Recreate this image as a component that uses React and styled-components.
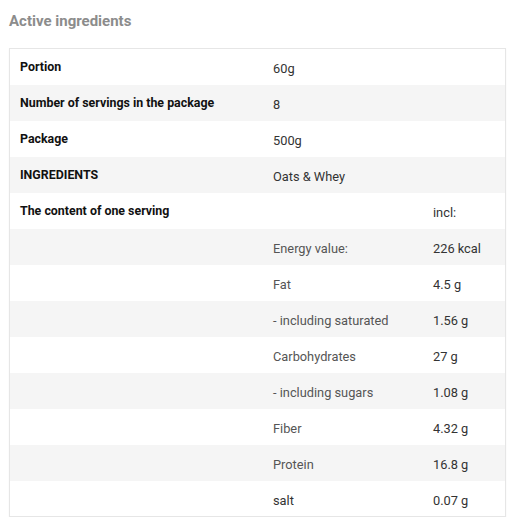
import React from "react";
import styled, { createGlobalStyle } from "styled-components";

const Global = createGlobalStyle`
  body {
    margin: 0;
    background: #fff;
    font-family: Roboto, "Liberation Sans", sans-serif;
  }
`;

const Wrapper = styled.div`
  padding: 11px 7px 0 9px;
`;

const Title = styled.h3`
  margin: 0 0 17px;
  font-size: 15px;
  line-height: 20px;
  font-weight: 700;
  color: #8c8c8c;
`;

const Table = styled.table`
  width: 497px;
  border-collapse: collapse;
  border: 1px solid #e6e6e6;
  box-shadow: 0 1px 2px rgba(0, 0, 0, 0.04);
`;

const Row = styled.tr`
  height: 36px;
  background: ${(p) => (p.$striped ? "#f5f5f5" : "#fff")};
`;

const Label = styled.td`
  width: 242px;
  padding: 0 0 1px 10px;
  font-size: 12.4px;
  font-weight: 700;
  color: #111;
  vertical-align: middle;
`;

const Cell = styled.td`
  width: ${(p) => p.$w || "auto"};
  padding: 4px 0 0 11px;
  font-size: 12.8px;
  color: ${(p) => (p.$muted ? "#555" : "#333")};
  vertical-align: middle;
`;

const general = [
  ["Portion", "60g"],
  ["Number of servings in the package", "8"],
  ["Package", "500g"],
  ["INGREDIENTS", "Oats & Whey"],
];

const nutrients = [
  ["Energy value:", "226 kcal"],
  ["Fat", "4.5 g"],
  ["- including saturated", "1.56 g"],
  ["Carbohydrates", "27 g"],
  ["- including sugars", "1.08 g"],
  ["Fiber", "4.32 g"],
  ["Protein", "16.8 g"],
  ["salt", "0.07 g"],
];

export default function App() {
  return (
    <>
      <Global />
      <Wrapper>
        <Title>Active ingredients</Title>
        <Table>
          <tbody>
            {general.map(([k, v], i) => (
              <Row key={k} $striped={i % 2 === 1}>
                <Label>{k}</Label>
                <Cell colSpan={2}>{v}</Cell>
              </Row>
            ))}
            <Row>
              <Label>The content of one serving</Label>
              <Cell $w="149px"></Cell>
              <Cell>incl:</Cell>
            </Row>
            {nutrients.map(([k, v], i) => (
              <Row key={k} $striped={i % 2 === 0}>
                <Label></Label>
                <Cell $w="149px" $muted={k !== "salt"}>{k}</Cell>
                <Cell>{v}</Cell>
              </Row>
            ))}
          </tbody>
        </Table>
      </Wrapper>
    </>
  );
}
